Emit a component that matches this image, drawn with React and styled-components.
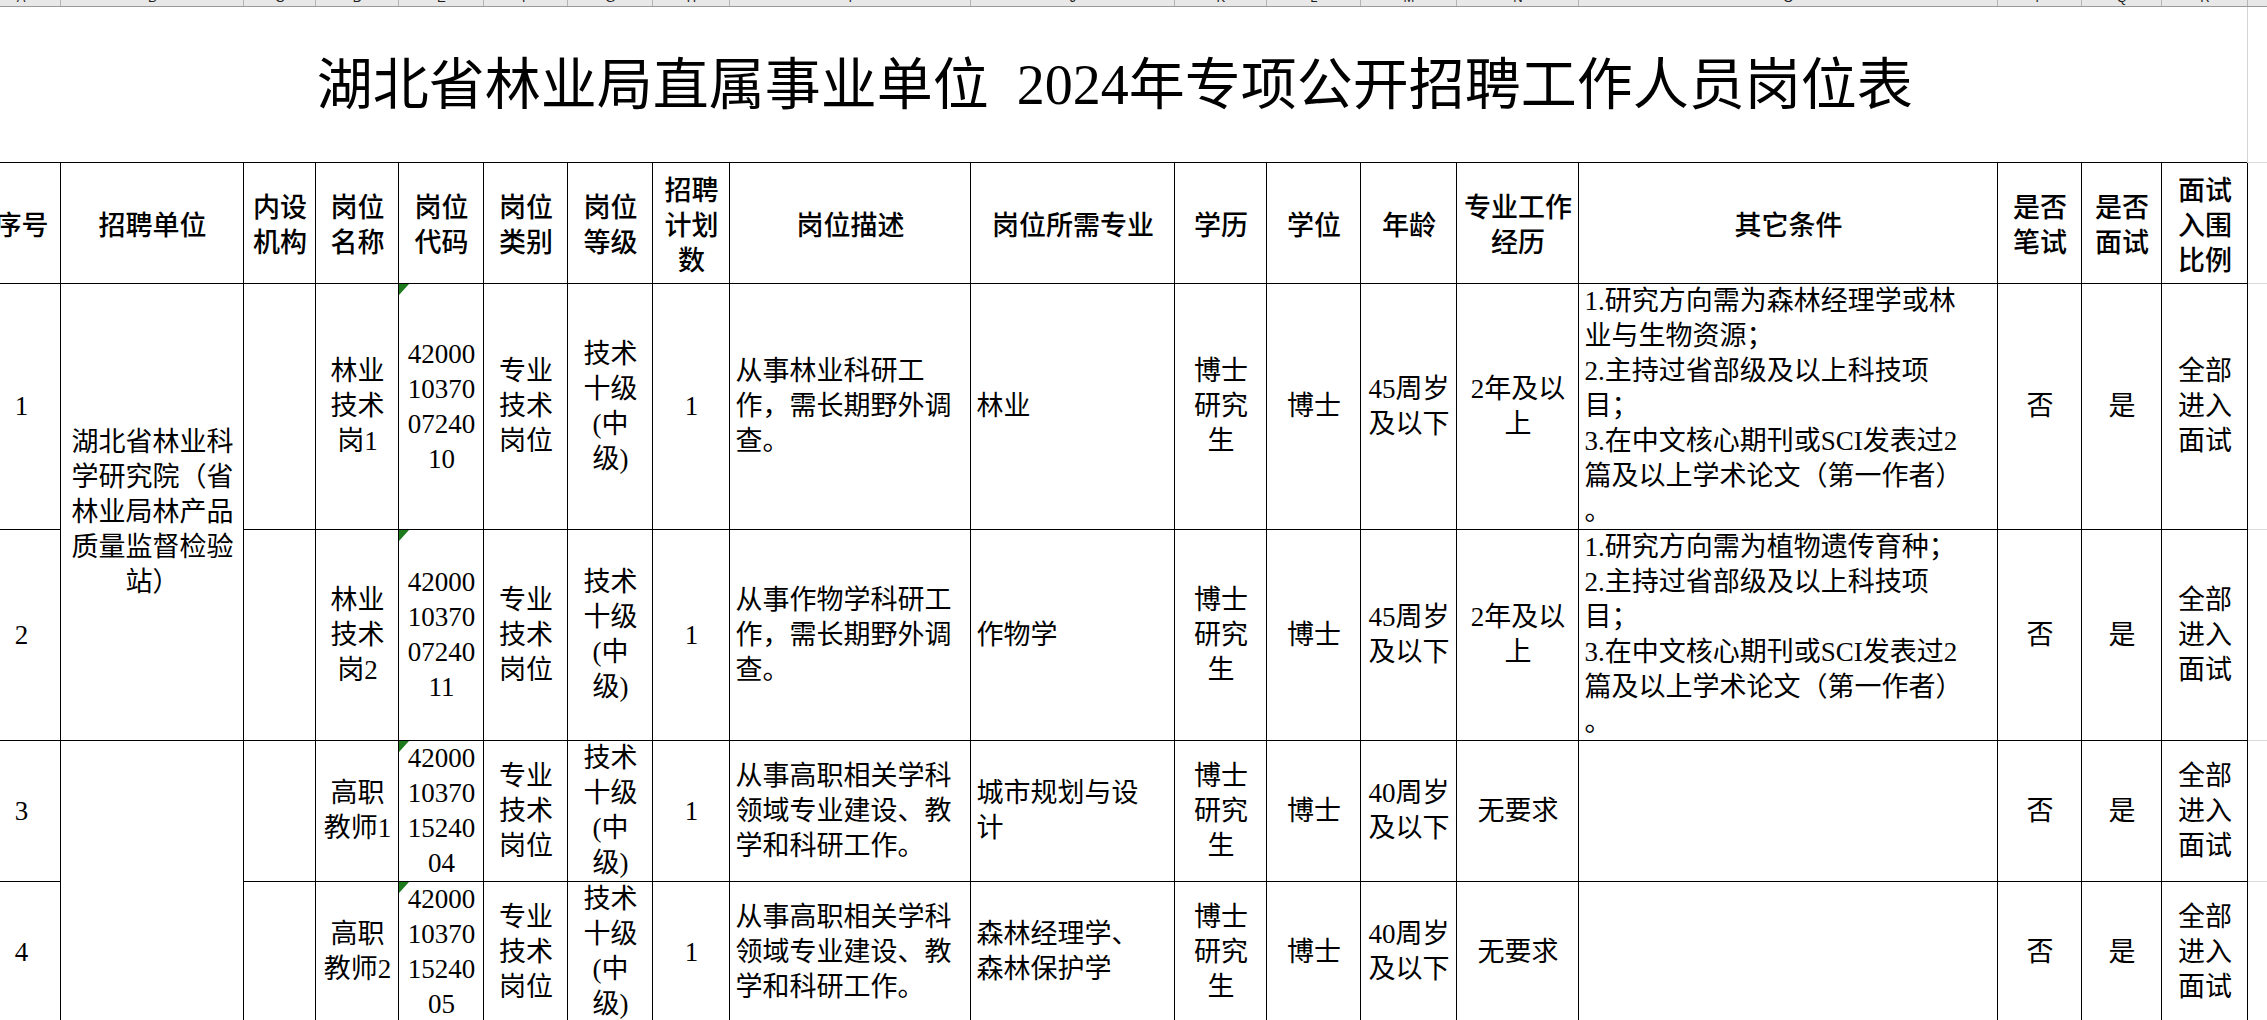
import styled, { createGlobalStyle } from "styled-components";

const COLS = [79, 183, 72, 83, 85, 84, 85, 77, 241, 204, 92, 94, 96, 122, 419, 84, 80, 86];
const LETTERS = "ABCDEFGHIJKLMNOPQR".split("");
const SPARE = 60;

const TITLE = "湖北省林业局直属事业单位 2024年专项公开招聘工作人员岗位表";

const HEAD = [
  ["序号"], ["招聘单位"], ["内设", "机构"], ["岗位", "名称"], ["岗位", "代码"],
  ["岗位", "类别"], ["岗位", "等级"], ["招聘", "计划", "数"], ["岗位描述"],
  ["岗位所需专业"], ["学历"], ["学位"], ["年龄"], ["专业工作", "经历"],
  ["其它条件"], ["是否", "笔试"], ["是否", "面试"], ["面试", "入围", "比例"],
];

const RESEARCH = ["湖北省林业科", "学研究院（省", "林业局林产品", "质量监督检验", "站）"];

const ROWS = [
  {
    h: 245, seq: "1", unit: { lines: RESEARCH },
    name: ["林业", "技术", "岗1"], code: ["42000", "10370", "07240", "10"],
    desc: ["从事林业科研工", "作，需长期野外调", "查。"], major: ["林业"],
    age: ["45周岁", "及以下"], exp: ["2年及以", "上"],
    cond: [
      "1.研究方向需为森林经理学或林", "业与生物资源；", "2.主持过省部级及以上科技项", "目；",
      "3.在中文核心期刊或SCI发表过2", "篇及以上学术论文（第一作者）", "。",
    ],
  },
  {
    h: 210, seq: "2",
    name: ["林业", "技术", "岗2"], code: ["42000", "10370", "07240", "11"],
    desc: ["从事作物学科研工", "作，需长期野外调", "查。"], major: ["作物学"],
    age: ["45周岁", "及以下"], exp: ["2年及以", "上"],
    cond: [
      "1.研究方向需为植物遗传育种；", "2.主持过省部级及以上科技项", "目；",
      "3.在中文核心期刊或SCI发表过2", "篇及以上学术论文（第一作者）", "。",
    ],
  },
  {
    h: 140, seq: "3", unit: { lines: [], open: true },
    name: ["高职", "教师1"], code: ["42000", "10370", "15240", "04"],
    desc: ["从事高职相关学科", "领域专业建设、教", "学和科研工作。"], major: ["城市规划与设", "计"],
    age: ["40周岁", "及以下"], exp: ["无要求"], cond: [],
  },
  {
    h: 140, seq: "4",
    name: ["高职", "教师2"], code: ["42000", "10370", "15240", "05"],
    desc: ["从事高职相关学科", "领域专业建设、教", "学和科研工作。"], major: ["森林经理学、", "森林保护学"],
    age: ["40周岁", "及以下"], exp: ["无要求"], cond: [],
  },
];

const GlobalStyle = createGlobalStyle`
  html, body {
    margin: 0;
    padding: 0;
    background: #fff;
    overflow: hidden;
  }
`;

const Page = styled.div`
  width: 2267px;
  height: 1020px;
  overflow: hidden;
  background: #fff;
`;

const Sheet = styled.table`
  border-collapse: collapse;
  table-layout: fixed;
  width: ${COLS.reduce((a, b) => a + b, 0) + SPARE}px;
  margin-left: -18.6px;
  color: #000;
  font-family: "Liberation Serif", "Noto Sans CJK SC", serif;
  font-size: 27px;
  line-height: 35px;
`;

const ColHead = styled.td`
  height: 6px;
  padding: 0;
  background: #e8e8e8;
  border-right: 1px solid #b4b4b4;
  border-bottom: 1px solid #9a9a9a;
  vertical-align: top;
  overflow: hidden;
`;

const ColLetter = styled.div`
  height: 6px;
  overflow: hidden;
  text-align: center;
  font: 13px/13px "Liberation Sans", sans-serif;
  color: #1e1e1e;

  span {
    display: block;
    transform: translateY(-9px);
  }
`;

const Row = styled.tr`
  height: ${(p) => p.$h}px;
`;

const TitleCell = styled.td`
  padding: 0;
  text-align: center;
  vertical-align: middle;
  font-size: 56px;
  line-height: 1;
  word-spacing: 14px;
  white-space: nowrap;
  border-right: 1px solid #d4d4d4;
`;

const Grid = styled.td`
  padding: 0;
  border-top: 1px solid #dadada;
  border-bottom: 1px solid #dadada;
`;

const Head = styled.th`
  padding: 0;
  font-family: "Noto Sans CJK SC", sans-serif;
  font-weight: 500;
  text-align: center;
  vertical-align: middle;
  border: 1px solid #000;
`;

const Cell = styled.td`
  position: relative;
  padding: 0 0 0 ${(p) => (p.$align === "left" ? 5 : 0)}px;
  text-align: ${(p) => p.$align || "center"};
  vertical-align: middle;
  border: 1px solid #000;
  border-bottom-style: ${(p) => (p.$open ? "none" : "solid")};
`;

const Line = styled.span`
  display: block;
  white-space: nowrap;
`;

const Flag = styled.span`
  position: absolute;
  top: 0;
  left: 0;
  width: 0;
  height: 0;
  border-top: 11px solid #1d7a1d;
  border-right: 10px solid transparent;
`;

const Lines = ({ lines }) => lines.map((l, i) => <Line key={i}>{l}</Line>);

export default function App() {
  return (
    <Page>
      <GlobalStyle />
      <Sheet>
        <colgroup>
          {COLS.map((w, i) => (
            <col key={i} style={{ width: w }} />
          ))}
          <col style={{ width: SPARE }} />
        </colgroup>
        <tbody>
          <tr>
            {LETTERS.map((l) => (
              <ColHead key={l}>
                <ColLetter>
                  <span>{l}</span>
                </ColLetter>
              </ColHead>
            ))}
            <ColHead>
              <ColLetter>
                <span>S</span>
              </ColLetter>
            </ColHead>
          </tr>
          <Row $h={156}>
            <TitleCell colSpan={COLS.length}>{TITLE}</TitleCell>
            <Grid />
          </Row>
          <Row $h={121}>
            {HEAD.map((h, i) => (
              <Head key={i}>
                <Lines lines={h} />
              </Head>
            ))}
            <Grid />
          </Row>
          {ROWS.map((r) => (
            <Row key={r.seq} $h={r.h}>
              <Cell>{r.seq}</Cell>
              {r.unit && (
                <Cell rowSpan={2} $open={r.unit.open}>
                  <Lines lines={r.unit.lines} />
                </Cell>
              )}
              <Cell />
              <Cell>
                <Lines lines={r.name} />
              </Cell>
              <Cell>
                <Flag />
                <Lines lines={r.code} />
              </Cell>
              <Cell>
                <Lines lines={["专业", "技术", "岗位"]} />
              </Cell>
              <Cell>
                <Lines lines={["技术", "十级", "(中", "级)"]} />
              </Cell>
              <Cell>1</Cell>
              <Cell $align="left">
                <Lines lines={r.desc} />
              </Cell>
              <Cell $align="left">
                <Lines lines={r.major} />
              </Cell>
              <Cell>
                <Lines lines={["博士", "研究", "生"]} />
              </Cell>
              <Cell>博士</Cell>
              <Cell>
                <Lines lines={r.age} />
              </Cell>
              <Cell>
                <Lines lines={r.exp} />
              </Cell>
              <Cell $align="left">
                <Lines lines={r.cond} />
              </Cell>
              <Cell>否</Cell>
              <Cell>是</Cell>
              <Cell>
                <Lines lines={["全部", "进入", "面试"]} />
              </Cell>
              <Grid />
            </Row>
          ))}
        </tbody>
      </Sheet>
    </Page>
  );
}
